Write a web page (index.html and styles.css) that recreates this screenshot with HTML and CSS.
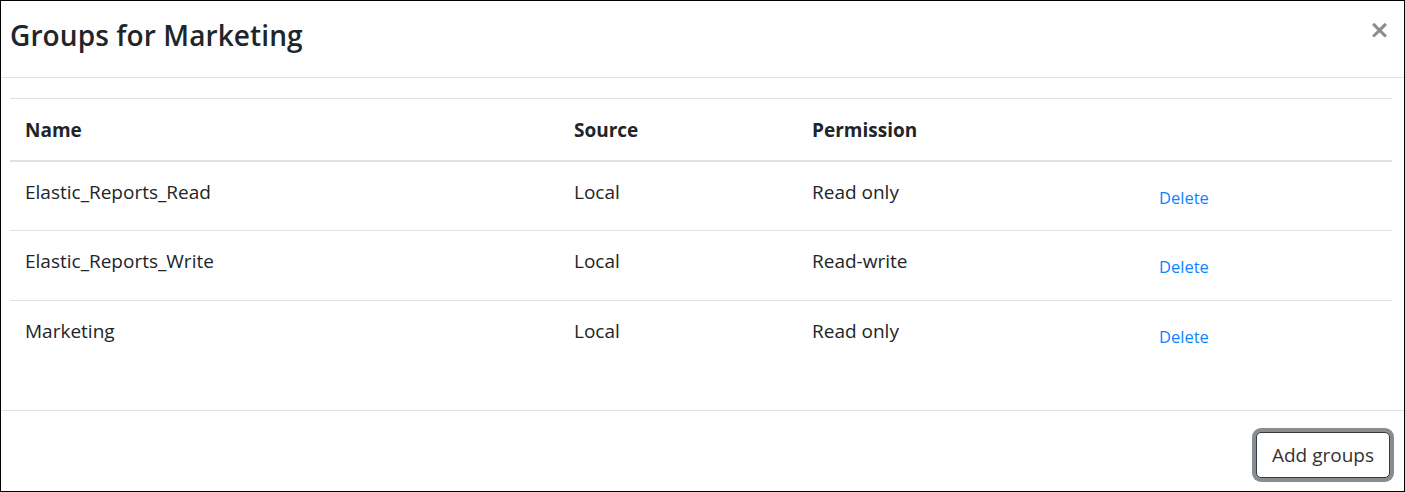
FILE: index.html
```html
<!DOCTYPE html>
<html>
<head>
<meta charset="utf-8">
<link rel="stylesheet" href="styles.css">
</head>
<body>
<div class="modal">
  <div class="modal-header">
    <h4 class="modal-title">Groups for Marketing</h4>
    <button class="close" type="button">×</button>
  </div>
  <div class="modal-body">
    <table class="table">
      <thead>
        <tr>
          <th class="c-name">Name</th>
          <th class="c-source">Source</th>
          <th class="c-perm">Permission</th>
          <th class="c-act"></th>
        </tr>
      </thead>
      <tbody>
        <tr>
          <td>Elastic_Reports_Read</td>
          <td>Local</td>
          <td>Read only</td>
          <td class="act"><a class="link">Delete</a></td>
        </tr>
        <tr>
          <td>Elastic_Reports_Write</td>
          <td>Local</td>
          <td>Read-write</td>
          <td class="act"><a class="link">Delete</a></td>
        </tr>
        <tr>
          <td>Marketing</td>
          <td>Local</td>
          <td>Read only</td>
          <td class="act"><a class="link">Delete</a></td>
        </tr>
      </tbody>
    </table>
  </div>
  <div class="modal-footer">
    <button class="btn" type="button">Add groups</button>
  </div>
</div>
</body>
</html>
```
FILE: styles.css
```css
* { box-sizing: border-box; }
html, body { margin: 0; padding: 0; background: #fff; }
body {
  font-family: "Open Sans", "Noto Sans", sans-serif;
  color: #212529;
  font-size: 20px;
}
.modal {
  width: 1405px;
  height: 492px;
  border: 1px solid #000;
  display: flex;
  flex-direction: column;
  background: #fff;
}
.modal-header {
  height: 77px;
  flex: none;
  display: flex;
  align-items: flex-start;
  justify-content: space-between;
  border-bottom: 1px solid #dee2e6;
  padding: 0 14px 0 9px;
}
.modal-title {
  margin: 0;
  font-weight: 600;
  font-size: 28px;
  line-height: 36px;
  padding-top: 16px;
  letter-spacing: 0.1px;
}
.close {
  background: none;
  border: 0;
  padding: 0;
  margin-top: 11px;
  font-family: "DejaVu Sans", sans-serif;
  font-size: 25px;
  font-weight: bold;
  line-height: 36px;
  color: #8c8c8c;
  cursor: pointer;
}
.modal-body {
  flex: 1;
  padding: 20px 12px 0 9px;
}
.table {
  width: 100%;
  border-collapse: collapse;
}
.table th, .table td {
  text-align: left;
  padding: 0 0 0 15px;
  vertical-align: top;
}
.table th {
  font-weight: 700;
  height: 62px;
  padding-top: 18px;
  border-top: 1px solid #dee2e6;
  border-bottom: 2px solid #dee2e6;
  font-size: 19px;
}
.table td {
  height: 70px;
  padding-top: 17px;
  border-top: 1px solid #dee2e6;
  font-size: 19px;
}
.c-name { width: 549px; }
.c-source { width: 238px; }
.c-perm { width: 332px; }
.table td.act { padding-top: 22px; padding-left: 30px; }
.link {
  color: #0d84ff;
  font-size: 16.5px;
  text-decoration: none;
}
.modal-footer {
  flex: none;
  height: 81px;
  border-top: 1px solid #dee2e6;
  display: flex;
  justify-content: flex-end;
  align-items: flex-start;
  padding: 21px 14px 0 0;
}
.btn {
  font-family: "Open Sans", "Noto Sans", sans-serif;
  font-size: 19px;
  color: #333;
  background: #fff;
  border: 1px solid #343a40;
  border-radius: 5px;
  width: 134px;
  height: 46px;
  padding: 0;
  box-shadow: 0 0 0 4px #8a8d90;
}
```
